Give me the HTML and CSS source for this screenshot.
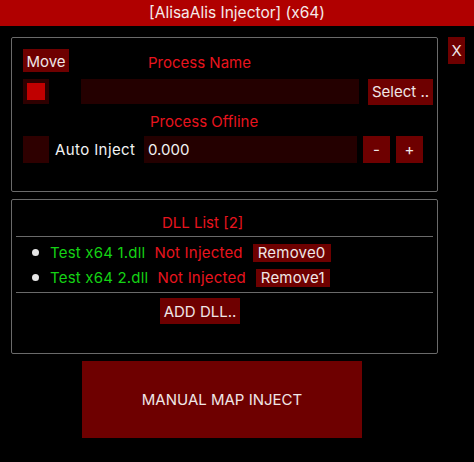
FILE: index.html
```html
<!DOCTYPE html>
<html>
  <head>
    <meta charset="UTF-8" />
    <title>AlisaAlis Injector</title>
    <link rel="stylesheet" href="styles.css">
  </head>
  <body>
    <div class="titlebar">[AlisaAlis Injector] (x64)</div>

    <div class="window">
      <div class="column">
        <div class="panel top-panel">
          <div class="row row-move">
            <button class="btn move">Move</button>
            <span class="red-label name-label">Process Name</span>
          </div>

          <div class="row row-process">
            <span class="checkbox checked"><span class="mark"></span></span>
            <span class="field process-field"></span>
            <button class="btn select">Select ..</button>
          </div>

          <div class="row row-offline">
            <span class="red-label offline-label">Process Offline</span>
          </div>

          <div class="row row-auto">
            <span class="checkbox tall"></span>
            <span class="auto-label">Auto Inject</span>
            <span class="field delay-field">0.000</span>
            <button class="btn step">-</button>
            <button class="btn step">+</button>
          </div>
        </div>

        <div class="panel dll-panel">
          <div class="dll-title">DLL List [2]</div>
          <div class="separator"></div>

          <div class="dll-row first">
            <span class="bullet"></span>
            <span class="dll-name">Test x64 1.dll</span>
            <span class="dll-state">Not Injected</span>
            <button class="btn remove">Remove0</button>
          </div>
          <div class="dll-row">
            <span class="bullet"></span>
            <span class="dll-name">Test x64 2.dll</span>
            <span class="dll-state">Not Injected</span>
            <button class="btn remove">Remove1</button>
          </div>

          <div class="separator"></div>
          <div class="add-row">
            <button class="btn add">ADD DLL..</button>
          </div>
        </div>

        <button class="btn inject">MANUAL MAP INJECT</button>
      </div>

      <button class="btn close">X</button>
    </div>
  </body>
</html>
```

FILE: styles.css
```css
body {
  margin: 0;
  background: #000;
  color: #f2f2f2;
  font-family: "Inter", "Noto Sans", sans-serif;
  font-size: 15px;
  width: 474px;
  height: 462px;
  overflow: hidden;
}

.titlebar {
  height: 26px;
  line-height: 26px;
  background: #b00000;
  color: #f5eaea;
  text-align: center;
  font-size: 15.5px;
}

.window {
  display: flex;
  align-items: flex-start;
  padding: 11px 0 0 11px;
}

.column {
  display: flex;
  flex-direction: column;
  width: 427px;
}

.btn {
  font-family: inherit;
  font-size: 15px;
  color: #f0e6e6;
  background: #6e0000;
  border: none;
  padding: 0;
  margin: 0;
  cursor: pointer;
}

.close {
  margin-left: 10px;
  width: 17px;
  height: 27px;
  font-size: 15px;
}

.panel {
  box-sizing: border-box;
  border: 1px solid #6a6a6a;
  border-radius: 2px;
  height: 155px;
}

.top-panel {
  padding: 11px 0 0 11px;
}

.row {
  display: flex;
  align-items: center;
}

.row-move {
  height: 23px;
}

.move {
  width: 46px;
  height: 23px;
  padding-top: 2px;
}

.red-label {
  color: #e8141e;
}

.name-label {
  margin-left: 79px;
  padding-top: 3px;
}

.row-process {
  margin-top: 7px;
  height: 25px;
}

.checkbox {
  display: flex;
  align-items: center;
  justify-content: center;
  width: 26px;
  height: 25px;
  background: #2e0000;
}

.checkbox.tall {
  height: 27px;
}

.mark {
  width: 18px;
  height: 17px;
  background: #c00000;
}

.field {
  display: flex;
  align-items: center;
  height: 100%;
  background: #240000;
  box-sizing: border-box;
}

.process-field {
  margin-left: 32px;
  width: 278px;
}

.select {
  margin-left: 9px;
  width: 65px;
  height: 26px;
}

.row-offline {
  height: 22px;
  margin-top: 6px;
}

.offline-label {
  margin-left: 127px;
}

.row-auto {
  margin-top: 4px;
  height: 27px;
}

.auto-label {
  margin-left: 6px;
  width: 89px;
  letter-spacing: 0.4px;
}

.delay-field {
  width: 213px;
  padding-left: 4px;
}

.step {
  margin-left: 6px;
  width: 27px;
  height: 27px;
}

.step + .step {
  margin-left: 6px;
}

.dll-panel {
  margin-top: 7px;
  padding: 0 4px;
}

.dll-title {
  color: #e8141e;
  height: 36px;
  line-height: 45px;
  padding-left: 146px;
}

.separator {
  height: 1px;
  background: #6a6a6a;
}

.dll-row {
  display: flex;
  align-items: center;
  height: 25px;
  letter-spacing: 0.2px;
}

.dll-row.first {
  margin-top: 3px;
}

.bullet {
  width: 7px;
  height: 7px;
  border-radius: 50%;
  background: #e6e6e6;
  margin-left: 16px;
}

.dll-name {
  color: #14d214;
  margin-left: 11px;
}

.dll-state {
  color: #e8141e;
  margin-left: 9px;
}

.remove {
  height: 18px;
  margin-left: 10px;
  padding: 0 5px;
  line-height: 18px;
  letter-spacing: 0.2px;
}

.dll-row + .separator {
  margin-top: 2px;
}

.add-row {
  padding: 5px 0 0 144px;
}

.add {
  width: 80px;
  height: 26px;
}

.inject {
  margin: 7px 0 0 71px;
  width: 280px;
  height: 77px;
}
```
